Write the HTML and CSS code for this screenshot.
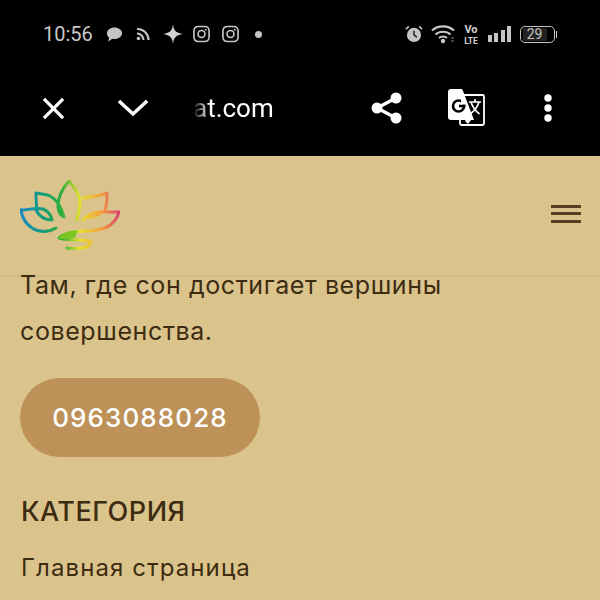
FILE: index.html
```html
<!DOCTYPE html>
<html lang="ru">
  <head>
    <meta charset="UTF-8" />
    <meta name="viewport" content="width=device-width, initial-scale=1.0" />
    <title>Главная страница</title>
    <link rel="stylesheet" href="styles.css">
  </head>
  <body>
    <div class="top">
      <div class="status">
        <span class="time">10:56</span>
        <svg class="ic chat" viewBox="0 0 18 18"><path d="M9 2c4.400 0 8 2.600 8 6.100s-3.600 6.100-8 6.100c-.8 0-1.500-.1-2.200-.3L2.300 17l1-4.300C1.800 11.500 1 9.900 1 8.100 1 4.600 4.600 2 9 2z" fill="#c4c4c4"/></svg>
        <svg class="ic rss" viewBox="0 0 14 14" fill="none" stroke="#c4c4c4" stroke-width="2.200"><circle cx="2.500" cy="11.500" r="1.800" fill="#c4c4c4" stroke="none"/><path d="M1 6.500a6.500 6.500 0 0 1 6.500 6.500M1 2a11 11 0 0 1 11.500 11"/></svg>
        <svg class="ic star" viewBox="0 0 20 20"><path d="M10 0c.6 6 2.500 9 10 10-7.500 1-9.400 4-10 10-.6-6-2.500-9-10-10 7.500-1 9.400-4 10-10z" fill="#d2d2d2"/></svg>
        <svg class="ic insta" viewBox="0 0 18 18" fill="none" stroke="#c8c8c8" stroke-width="1.700"><rect x="1" y="1" width="16" height="16" rx="4.500"/><circle cx="9" cy="9" r="3.700"/><circle cx="13.500" cy="4.500" r="1" fill="#c8c8c8" stroke="none"/></svg>
        <svg class="ic insta last" viewBox="0 0 18 18" fill="none" stroke="#c8c8c8" stroke-width="1.700"><rect x="1" y="1" width="16" height="16" rx="4.500"/><circle cx="9" cy="9" r="3.700"/><circle cx="13.500" cy="4.500" r="1" fill="#c8c8c8" stroke="none"/></svg>
        <span class="dot"></span>
        <span class="spacer"></span>
        <svg class="ic alarm" viewBox="0 0 19 18"><circle cx="9.500" cy="10" r="7.500" fill="#c4c4c4"/><path d="M9.500 5.500V10l3 2.500" fill="none" stroke="#000" stroke-width="1.300"/><path d="M1 4l3-3M18 4l-3-3" stroke="#c4c4c4" stroke-width="1.800"/></svg>
        <svg class="ic wifi" viewBox="0 0 24 20" fill="none" stroke="#c8c8c8" stroke-width="2.200"><path d="M1 6.500c6-5.500 16-5.500 22 0M4.500 10.500c4-3.700 11-3.700 15 0M8 14c2.200-2 5.800-2 8 0"/><circle cx="12" cy="17" r="2.200" fill="#c8c8c8" stroke="none"/><path d="M20 14h3M20 17h3" stroke="#555" stroke-width="1.500"/></svg>
        <span class="volte"><span class="vo">Vo</span><span class="lte">LTE</span></span>
        <span class="bars"><i class="b1"></i><i class="b2"></i><i class="b3"></i><i class="b4"></i></span>
        <span class="batt"><span class="batt-num">29</span></span>
      </div>
      <div class="toolbar">
        <svg class="x" viewBox="0 0 24 24" fill="none" stroke="#fff" stroke-width="3.400"><path d="M2 2l20 20M22 2L2 22"/></svg>
        <svg class="chev" viewBox="0 0 30 18" fill="none" stroke="#fff" stroke-width="3.400"><path d="M1 2l14 13L29 2"/></svg>
        <span class="url">at.com</span>
        <span class="spacer"></span>
        <svg class="share" viewBox="0 0 32 34" fill="none" stroke="#fff" stroke-width="3.400" stroke-linejoin="round"><path d="M25 7L6 17l19 10"/><circle cx="25" cy="7" r="5.500" fill="#fff" stroke="none"/><circle cx="6" cy="17" r="5.500" fill="#fff" stroke="none"/><circle cx="25" cy="27" r="5.500" fill="#fff" stroke="none"/></svg>
        <svg class="translate" viewBox="0 0 38 38">
          <rect x="12" y="6" width="24" height="30" rx="1.500" fill="#000" stroke="#fff" stroke-width="1.800"/>
          <path d="M3 0h10a2 2 0 0 1 1.500.8L26 31H3a3 3 0 0 1-3-3V3a3 3 0 0 1 3-3z" fill="#fff"/>
          <path d="M18 30l-1 2 3 3 3-4z" fill="#fff"/>
          <circle cx="10.500" cy="17" r="5.500" fill="none" stroke="#000" stroke-width="2.600"/>
          <path d="M11 17h6.500" stroke="#000" stroke-width="2.600"/><path d="M13 11h4v4.500h-4z" fill="#fff"/>
          <path d="M21 13h12M27 10v3M23 13c1.500 5 4.500 9 8.500 12M31 13c-1.500 5-4.500 9-9 12" fill="none" stroke="#fff" stroke-width="1.600"/>
        </svg>
        <svg class="more" viewBox="0 0 8 28"><circle cx="4" cy="4" r="3.700" fill="#fff"/><circle cx="4" cy="14" r="3.700" fill="#fff"/><circle cx="4" cy="24" r="3.700" fill="#fff"/></svg>
      </div>
    </div>

    <header class="site-head">
      <svg class="logo" viewBox="0 0 100 72" fill="none" stroke-width="3" stroke-linecap="round" stroke-linejoin="round">
        <defs>
          <linearGradient id="rainbow" gradientUnits="userSpaceOnUse" x1="0" y1="0" x2="100" y2="0">
            <stop offset="0" stop-color="#1a86c8"/>
            <stop offset="0.2" stop-color="#0f9a86"/>
            <stop offset="0.42" stop-color="#2fae3a"/>
            <stop offset="0.6" stop-color="#e6e22c"/>
            <stop offset="0.8" stop-color="#f4a43a"/>
            <stop offset="1" stop-color="#dc3f72"/>
          </linearGradient>
        </defs>
        <g stroke="url(#rainbow)">
          <path d="M1 32c8 0 15-3 22-1 5 2 8 6 9 11-7 0-13-4-16-10"/>
          <path d="M1 32c1 8 5 14 11 18 8 5 17 4 24 0"/>
          <path d="M17 32c-1-6-1-11-1-17 6 1 10 1 14 3 6 3 11 10 14 21-4-2-6-6-6-11 0-9 4-17 11-25 6 7 11 14 11 21 0 7-2 12-3 18"/>
          <path d="M63 20c8-1 16-2 24-5 0 6 0 11-2 17"/>
          <path d="M63 42c5-6 11-8 18-8 6 0 12 0 18 0-2 7-6 12-12 15"/>
          <path d="M66 39c6 1 12-1 15-5"/>
          <path d="M87 49c-7 3-14 4-22 4-10 0-19 1-26 7 7 2 14 2 21 2 4 0 8 0 11 2-2 4-6 6-10 6-5 1-10 1-14 0"/>
        </g>
        <path d="M39 60c4-5 10-7 18-7l-2 6c-5 1-11 2-16 1z" fill="#7cc520" stroke="#7cc520" stroke-width="1"/>
      </svg>
      <div class="burger"><i></i><i></i><i></i></div>
    </header>

    <main class="content">
      <p class="lead">Там, где сон достигает вершины совершенства.</p>
      <a class="phone-btn">0963088028</a>
      <h3 class="cat-title">КАТЕГОРИЯ</h3>
      <a class="cat-link">Главная страница</a>
    </main>
  </body>
</html>
```

FILE: styles.css
```css
html, body {
  margin: 0;
  padding: 0;
}

body {
  width: 600px;
  height: 600px;
  overflow: hidden;
  background-color: #dac48b;
  font-family: "Inter", "Noto Sans", sans-serif;
}

.spacer {
  flex: 1;
}

.top {
  background-color: #000;
  height: 156px;
}

.status {
  display: flex;
  align-items: center;
  height: 24px;
  padding: 22px 45px 0 43px;
  color: #c8c8c8;
}

.time {
  font-family: "Roboto", sans-serif;
  font-size: 20px;
  width: 63px;
}

.ic {
  display: block;
  height: 18px;
}

.chat { width: 17px; margin-right: 13px; }
.rss { width: 14px; height: 14px; margin-right: 13px; }
.star { width: 20px; height: 20px; margin-right: 10px; }
.insta { width: 17px; margin-right: 12px; }
.insta.last { margin-right: 16px; }
.alarm { width: 18px; margin-right: 8px; }
.wifi { width: 24px; height: 20px; margin-right: 10px; }

.dot {
  width: 7px;
  height: 7px;
  border-radius: 50%;
  background-color: #c4c4c4;
}

.volte {
  display: flex;
  flex-direction: column;
  align-items: center;
  width: 13px;
  margin-right: 10px;
  font-family: "Roboto", sans-serif;
  font-weight: 700;
  color: #d0d0d0;
}

.vo {
  font-size: 11px;
  line-height: 13px;
}

.lte {
  font-size: 8.500px;
  line-height: 10px;
}

.bars {
  display: flex;
  align-items: flex-end;
  gap: 2.500px;
  height: 16px;
  margin-right: 9px;
}

.bars i {
  display: block;
  width: 4px;
  background-color: #c4c4c4;
}

.b1 { height: 7px; }
.b2 { height: 9px; }
.b3 { height: 12px; }
.b4 { height: 16px; }

.batt {
  display: flex;
  align-items: center;
  justify-content: center;
  box-sizing: border-box;
  width: 35px;
  height: 17px;
  border: 1px solid #c4c4c4;
  border-radius: 5px;
  position: relative;
  font-family: "Roboto", sans-serif;
  font-size: 14px;
  color: #c4c4c4;
}

/* battery nub */
.batt::after {
  content: "";
  position: absolute;
  right: -3px;
  top: 4px;
  width: 1px;
  height: 7px;
  background-color: #c4c4c4;
}

.batt-num {
  background-color: #222;
  width: 24px;
  text-align: center;
  line-height: 13px;
  margin-left: -6px;
}

.toolbar {
  display: flex;
  align-items: center;
  height: 48px;
  margin-top: 38px;
  padding: 0 48px 0 42px;
}

.x {
  width: 23px;
  height: 23px;
}

.chev {
  width: 30px;
  height: 18px;
  margin-left: 53px;
}

.url {
  margin-left: 45px;
  font-family: "Roboto", sans-serif;
  font-size: 26px;
  color: #fff;
  width: 80px;
  -webkit-mask-image: linear-gradient(to right, transparent 0, #000 16px);
  mask-image: linear-gradient(to right, transparent 0, #000 16px);
}

.share {
  width: 32px;
  height: 34px;
  margin-right: 45px;
}

.translate {
  width: 38px;
  height: 38px;
  margin-right: 58px;
}

.more {
  width: 8px;
  height: 28px;
}

.site-head {
  position: relative;
  display: flex;
  align-items: center;
  justify-content: space-between;
  box-sizing: border-box;
  height: 119px;
  padding: 0 20px;
  background-color: #dac48b;
  box-shadow: 0 1px 3px rgba(90, 70, 30, 0.12);
}

.logo {
  width: 100px;
  height: 72px;
  margin-top: -3px;
}

.burger {
  display: flex;
  flex-direction: column;
  gap: 4.500px;
  margin-right: -1px;
  margin-top: -4px;
}

.burger i {
  display: block;
  width: 30px;
  height: 3px;
  background-color: #54401f;
}

.content {
  padding: 0 20px;
  color: #3d2b12;
}

.lead {
  position: relative;
  width: 470px;
  margin: -13px 0 0 0;
  font-size: 25px;
  letter-spacing: 0.6px;
  line-height: 46px;
}

.phone-btn {
  display: flex;
  align-items: center;
  justify-content: center;
  width: 240px;
  height: 79px;
  margin-top: 24px;
  border-radius: 40px;
  background-color: #bd9158;
  color: #fff;
  font-size: 26px;
  font-weight: 500;
  letter-spacing: 1.1px;
}

.cat-title {
  margin: 38px 0 0 1px;
  font-size: 27px;
  letter-spacing: 0.5px;
  line-height: 34px;
  font-weight: 500;
}

.cat-link {
  display: block;
  margin: 22px 0 0 1px;
  font-size: 24px;
  letter-spacing: 1.1px;
  line-height: 34px;
}
```
